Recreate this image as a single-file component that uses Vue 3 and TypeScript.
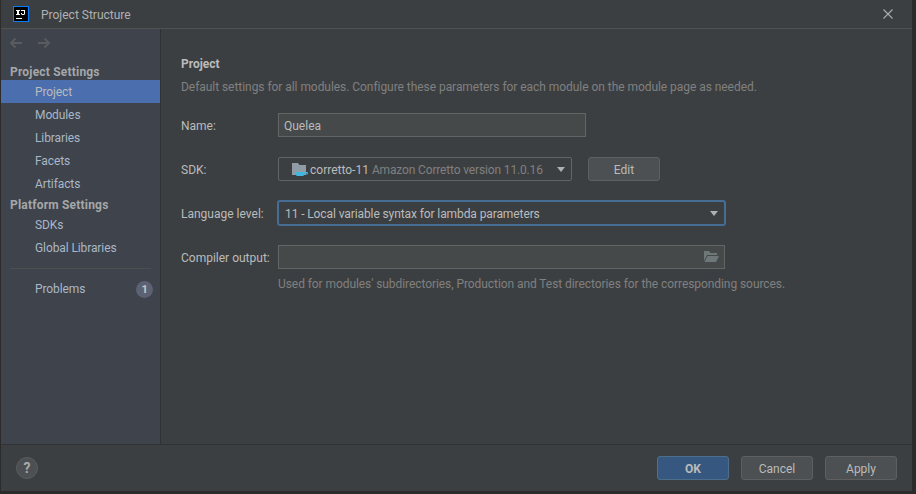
<script setup lang="ts">
const projectItems: string[] = ['Modules', 'Libraries', 'Facets', 'Artifacts']
const platformItems: string[] = ['SDKs', 'Global Libraries']
</script>

<template>
  <div class="screen">
    <div class="window">
      <header class="titlebar">
        <svg class="logo" width="16" height="16" viewBox="0 0 16 16">
          <rect x="0.5" y="0.5" width="15" height="15" fill="#000" stroke="#087cfa" />
          <rect x="3" y="12" width="6" height="1" fill="#fff" />
          <path d="M3 4h4v1H6v3h1v1H3V8h1V5H3zM8 4h4v4l-1 1H9L8 8V7h1v1h2V5H8z" fill="#fff" />
        </svg>
        <span class="title">Project Structure</span>
        <svg class="close" width="10" height="10" viewBox="0 0 10 10">
          <path d="M0.5 0.5l9 9M9.5 0.5l-9 9" stroke="#a9adb0" stroke-width="1.1" fill="none" />
        </svg>
      </header>

      <div class="body">
        <aside class="sidebar">
          <div class="nav-arrows">
            <svg width="14" height="12" viewBox="0 0 14 12">
              <path d="M13 6H2M6.500 1.500L2 6l4.500 4.500" stroke="#585c5f" stroke-width="2" fill="none" />
            </svg>
            <svg width="14" height="12" viewBox="0 0 14 12">
              <path d="M1 6h11M7.500 1.500L12 6l-4.500 4.500" stroke="#585c5f" stroke-width="2" fill="none" />
            </svg>
          </div>
          <div class="section">Project Settings</div>
          <div class="item selected">Project</div>
          <div v-for="item in projectItems" :key="item" class="item">{{ item }}</div>
          <div class="section">Platform Settings</div>
          <div v-for="item in platformItems" :key="item" class="item">{{ item }}</div>
          <div class="separator"></div>
          <div class="item problems">
            <span>Problems</span>
            <span class="badge">1</span>
          </div>
        </aside>

        <main class="content">
          <h1 class="heading">Project</h1>
          <p class="description">Default settings for all modules. Configure these parameters for each module on the module page as needed.</p>

          <div class="form">
            <label class="label">Name:</label>
            <div class="row">
              <div class="field name-field"><span class="value">Quelea</span></div>
            </div>

            <label class="label">SDK:</label>
            <div class="row">
              <div class="field select sdk-field">
                <svg class="sdk-icon" width="17" height="14" viewBox="0 0 17 14">
                  <path d="M0 0h6l1.500 2H14v10H0z" fill="#8f9ca5" />
                  <path d="M4 9h8v2.500c0 1-.7 1.500-1.500 1.500h-5C4.700 13 4 12.500 4 11.500z" fill="#40b6e0" />
                  <path d="M12 9.500h3.500V11H12" fill="none" stroke="#40b6e0" />
                </svg>
                <span class="value sdk-name">corretto-11</span>
                <span class="value sdk-version">Amazon Corretto version 11.0.16</span>
                <span class="caret"></span>
              </div>
              <button class="btn edit">Edit</button>
            </div>

            <label class="label">Language level:</label>
            <div class="row">
              <div class="field select level-field">
                <span class="value level-text">11 - Local variable syntax for lambda parameters</span>
                <span class="caret"></span>
              </div>
            </div>

            <label class="label">Compiler output:</label>
            <div class="row">
              <div class="field output-field">
                <svg class="folder" width="16" height="12" viewBox="0 0 16 12">
                  <path d="M1 0h5l1.500 2H14v2H4L1 10z" fill="#6e7878" />
                  <path d="M4.500 5H16l-3 6H1.500z" fill="#6e7878" />
                </svg>
              </div>
            </div>
          </div>
          <p class="hint">Used for modules' subdirectories, Production and Test directories for the corresponding sources.</p>
        </main>
      </div>

      <footer class="footer">
        <div class="help">?</div>
        <div class="actions">
          <button class="btn primary">OK</button>
          <button class="btn">Cancel</button>
          <button class="btn">Apply</button>
        </div>
      </footer>
    </div>
  </div>
</template>

<style>
html, body { margin: 0; padding: 0; background: #2b2b2b; }
</style>

<style scoped>
.screen {
  width: 916px;
  height: 494px;
  overflow: hidden;
  background: #2b2b2b;
  font-family: Roboto, "Noto Sans", sans-serif;
  font-size: 12px;
  color: #bbbbbb;
}
.window {
  width: 911px;
  height: 491px;
  margin-left: 1px;
  background: #3c3f41;
  display: flex;
  flex-direction: column;
}
.titlebar {
  height: 29px;
  box-sizing: border-box;
  flex: none;
  display: flex;
  align-items: center;
  padding: 0 19px 0 12px;
  border-bottom: 1px solid #515151;
}
.title { margin-left: 12px; color: #afb1b3; line-height: 16px; padding-top: 1px; }
.close { margin-left: auto; }
.body { flex: 1; display: flex; min-height: 0; }
.sidebar {
  width: 159px;
  flex: none;
  background: #3e434c;
  border-right: 1px solid #323232;
}
.nav-arrows {
  height: 33px;
  box-sizing: border-box;
  display: flex;
  align-items: center;
  gap: 14px;
  padding: 0 0 5px 8px;
}
.section {
  height: 18px;
  line-height: 21px;
  padding-left: 9px;
  font-weight: 700;
  letter-spacing: 0.2px;
  color: #a5a7a9;
}
.item {
  height: 23px;
  line-height: 25px;
  padding-left: 34px;
  letter-spacing: -0.1px;
  color: #a9b7c6;
}
.selected { background: #4b6eaf; color: #bbbbbb; }
.separator {
  height: 1px;
  margin: 9px 9px 9px;
  background: #4c4f50;
}
.problems {
  display: flex;
  align-items: center;
  justify-content: space-between;
  padding-right: 7px;
}
.badge {
  width: 17px;
  height: 17px;
  border-radius: 50%;
  background: #5c6274;
  color: #c8c8c8;
  font-weight: 700;
  font-size: 11px;
  line-height: 17px;
  text-align: center;
}
.content {
  flex: 1;
  min-width: 0;
  padding: 26px 20px 0;
}
.heading {
  margin: 0;
  padding-top: 1px;
  font-size: 12px;
  line-height: 17px;
  font-weight: 700;
  color: #bbbbbb;
}
.description {
  margin: 6px 0 0;
  line-height: 17px;
  letter-spacing: -0.05px;
  color: #808080;
}
.form {
  margin-top: 17px;
  display: grid;
  grid-template-columns: 97px 1fr;
  row-gap: 20px;
  align-items: center;
}
.label { color: #bbbbbb; white-space: nowrap; padding-top: 2px; }
.row { display: flex; align-items: center; gap: 16px; }
.field {
  height: 24px;
  box-sizing: border-box;
  border: 1px solid #646464;
  display: flex;
  align-items: center;
  padding: 0 5px;
  background: #45494a;
  color: #bbbbbb;
}
.value { padding-top: 1px; }
.name-field { width: 308px; }
.select { background: #3c3f41; border-radius: 2px; }
.sdk-field { width: 294px; padding: 0 6px 0 13px; }
.sdk-icon { flex: none; margin: 2px 1px 0 0; }
.sdk-version { color: #808080; margin-left: 3px; white-space: nowrap; letter-spacing: -0.15px; }
.sdk-name { white-space: nowrap; }
.level-text { letter-spacing: -0.1px; }
.caret {
  margin-left: auto;
  width: 0;
  height: 0;
  border-left: 4.500px solid transparent;
  border-right: 4.500px solid transparent;
  border-top: 5px solid #aeb0b2;
  flex: none;
}
.level-field {
  width: 447px;
  padding: 0 6px;
  border-color: #466d94;
  box-shadow: 0 0 0 1px #466d94;
}
.output-field { width: 447px; justify-content: flex-end; padding-right: 5px; }
.btn {
  width: 72px;
  height: 24px;
  box-sizing: border-box;
  border: 1px solid #5e6060;
  border-radius: 3px;
  background: #4c5052;
  color: #bbbbbb;
  font: inherit;
  padding: 2px 0 0;
}
.edit { flex: none; }
.primary {
  background: #365880;
  border-color: #4c708c;
  color: #bbbbbb;
  font-weight: 700;
}
.hint {
  margin: 7px 0 0 97px;
  line-height: 17px;
  letter-spacing: -0.07px;
  color: #808080;
  white-space: nowrap;
}
.footer {
  height: 47px;
  flex: none;
  box-sizing: border-box;
  border-top: 1px solid #323232;
  display: flex;
  align-items: center;
  justify-content: space-between;
  padding: 0 15px;
  background: #3c3f41;
}
.help {
  width: 22px;
  height: 22px;
  box-sizing: border-box;
  border: 1px solid #5a5d5f;
  border-radius: 50%;
  background: #4c5052;
  color: #a9a9a9;
  font-weight: 700;
  font-size: 14px;
  line-height: 20px;
  text-align: center;
}
.actions { display: flex; gap: 12px; }
</style>
